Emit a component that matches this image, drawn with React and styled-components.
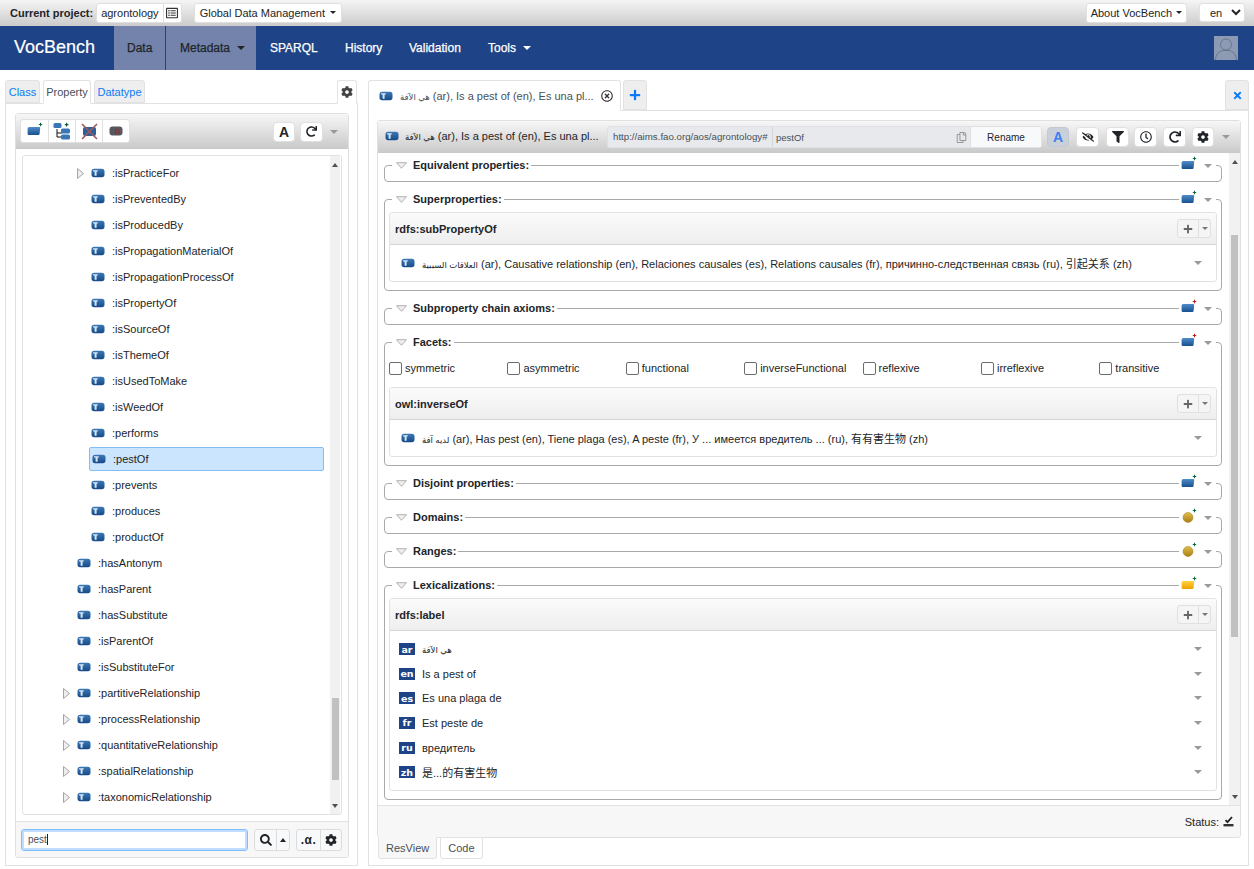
import React, { useId } from "react";
import styled, { createGlobalStyle } from "styled-components";
import { FaCog, FaSearch, FaFilter, FaEyeSlash, FaRegClock, FaRedo, FaPlus, FaTimes, FaRegCopy, FaRegTimesCircle, FaRegListAlt } from "react-icons/fa";

const FONT = `"Liberation Sans", "DejaVu Sans", "Noto Sans CJK SC", sans-serif`;

const Global = createGlobalStyle`
  html, body { margin: 0; height: 100%; overflow: hidden; background: #fff; }
  #root { height: 100%; }
  * { box-sizing: border-box; }
  body { font-family: ${FONT}; font-size: 11px; color: #212529; }
`;

const Page = styled.div`height: 869px; display: flex; flex-direction: column;`;

const TopBar = styled.header`
  height: 26px; flex: none; display: flex; align-items: center; padding: 0 9px 1px 10px;
  background: linear-gradient(#f5f5f5, #cbcbcb);
`;
const ProjectLabel = styled.b`font-size: 11px; margin-right: 3px;`;
const TopGroup = styled.div`
  height: 20px; display: flex; align-items: center; background: #fff; border: 1px solid #e0e0e0; border-radius: 3px;
`;
const ProjectName = styled.span`padding: 0 4px; line-height: 18px; border-right: 1px solid #ddd; font-size: 11px;`;
const ProjectIcon = styled.span`width: 17px; display: flex; justify-content: center; font-size: 12px; color: #333;`;
const TopButton = styled.button`
  height: 20px; display: flex; align-items: center; gap: ${p => p.$gap}px; padding: 0 ${p => p.$pad}px; margin-left: ${p => p.$ml || 0}px;
  background: #fff; border: 1px solid #e0e0e0; border-radius: 3px; font: 11px ${FONT}; color: #212529;
`;
const Spacer = styled.div`flex: 1;`;
const LangSelect = styled.select`
  width: 46px; height: 19px; margin-left: 12px; padding: 0 0 0 6px; background-color: #fff; border: 1px solid #e0e0e0; border-radius: 3px;
  font: 11px ${FONT}; color: #212529;
`;

const Caret = styled.i`
  display: inline-block; flex: none; width: 0; height: 0;
  border-left: ${p => p.$s || 3}px solid transparent; border-right: ${p => p.$s || 3}px solid transparent;
  border-top: ${p => p.$s || 3}px solid ${p => p.$c || "#212529"};
  margin-left: ${p => p.$ml || 0}px;
`;

const Nav = styled.nav`
  height: 44px; flex: none; display: flex; align-items: stretch; background: #1e4387; padding-right: 16px;
`;
const Brand = styled.div`width: 114px; padding-left: 14px; line-height: 42px; font-size: 18px; color: #fff; -webkit-text-stroke: 0.2px #fff;`;
const NavItem = styled.a`
  display: flex; align-items: center; gap: 6px; padding: 0 ${p => p.$px ?? 14}px; font-size: 12px; -webkit-text-stroke: 0.25px currentColor;
  width: ${p => p.$w}px; flex: none;
  color: ${p => p.$active ? "#212529" : "#fff"};
  background: ${p => p.$active ? "#7383ac" : "transparent"};
  margin-right: ${p => p.$mr || 0}px;
`;
const Avatar = styled.svg`width: 24px; height: 24px; align-self: center; margin-left: auto;`;

const Main = styled.main`flex: 1; min-height: 0; display: flex; gap: 10px; padding: 10px 5px 3px;`;
const LeftCol = styled.section`width: 353px; flex: none; display: flex; flex-direction: column;`;
const RightCol = styled.section`flex: 1; min-width: 0; display: flex; flex-direction: column;`;

const Tabs = styled.div`display: flex; gap: ${p => p.$gap ?? 3}px; height: ${p => p.$h || 23}px; flex: none; position: relative; z-index: 1;`;
const Tab = styled.div`
  display: flex; align-items: center; justify-content: center; width: ${p => p.$w}px; font-size: 11px; border: 1px solid #e2e2e2; border-radius: 3px 3px 0 0;
  height: ${p => p.$active ? "calc(100% + 1px)" : "100%"};
  color: ${p => p.$active ? "#495057" : "#0d7bf5"}; background: ${p => p.$active ? "#fff" : "#eeeeee"};
  border-bottom-color: ${p => p.$active ? "#fff" : "#e2e2e2"};
  margin-left: ${p => p.$auto ? "auto" : 0}; margin-right: ${p => p.$mr || 0}px;
`;
const Panel = styled.div`flex: 1; min-height: 0; display: flex; flex-direction: column; border: 1px solid #e2e2e2; padding: ${p => p.$pad};`;
const Card = styled.div`flex: 1; min-height: 0; display: flex; flex-direction: column; border: 1px solid #e0e0e0; border-radius: 3px;`;
const Toolbar = styled.div`
  height: ${p => p.$h}px; flex: none; display: flex; align-items: center; padding: 0 ${p => p.$pr}px 0 ${p => p.$pl}px;
  background: linear-gradient(#f7f7f7, #c9c9c9);
`;
const BtnGroup = styled.div`display: flex; background: #fff; border: 1px solid #e0e0e0; border-radius: 3px; height: 24px; margin-bottom: 1px;`;
const GroupBtn = styled.span`
  width: 27px; display: flex; align-items: center; justify-content: center;
  & + & { border-left: 1px solid #e0e0e0; }
`;
const IconBtn = styled.span`
  width: ${p => p.$w || 23}px; height: ${p => p.$h || 20}px; display: flex; align-items: center; justify-content: center; flex: none;
  background: ${p => p.$on ? "#c9d0da" : "#fff"}; border: 1px solid ${p => p.$on ? "#c4c9d1" : "#e0e0e0"}; border-radius: 4px;
  color: ${p => p.$c || "#212529"}; font-size: ${p => p.$fs || 12}px; margin-left: ${p => p.$ml || 0}px;
`;
const LetterA = styled.b`font: bold 14px "Liberation Sans", sans-serif;`;

const TreeWrap = styled.div`flex: 1; min-height: 0; padding: 6px; display: flex;`;
const TreeBox = styled.div`flex: 1; min-width: 0; display: flex; border: 1px solid #e2e2e2; border-radius: 3px; overflow: hidden;`;
const TreeList = styled.ul`flex: 1; min-width: 0; margin: 0; padding: 4px 6px 0 0; list-style: none;`;
const TreeRow = styled.li`display: flex; align-items: center; height: 26px; padding-left: ${p => 38 + p.$level * 14}px;`;
const ArrowSlot = styled.span`width: 14px; flex: none; display: flex; align-items: center; padding-left: 2px;`;
const TreeLabel = styled.span`
  flex: 1; height: 24px; display: flex; align-items: center; gap: 7px; border-radius: 2px; font-size: 11px;
  padding-left: ${p => p.$sel ? 2 : 1}px; border: 1px solid ${p => p.$sel ? "#85bdf2" : "transparent"};
  background: ${p => p.$sel ? "#cce5ff" : "transparent"};
`;
const Scrollbar = styled.div`width: ${p => p.$w || 10}px; flex: none; background: #f1f1f1; display: flex; flex-direction: column; margin-right: ${p => p.$mr || 0}px;`;
const ScrollEnd = styled.span`height: 17px; flex: none; display: flex; align-items: center; justify-content: center;`;
const UpTri = styled.i`width: 0; height: 0; border-left: 3px solid transparent; border-right: 3px solid transparent; border-bottom: 4px solid ${p => p.$c || "#505050"};`;
const DownTri = styled.i`width: 0; height: 0; border-left: 3px solid transparent; border-right: 3px solid transparent; border-top: 4px solid #505050;`;
const ScrollTrack = styled.div`flex: 1; min-height: 0;`;
const ScrollThumb = styled.div`width: 7px; height: ${p => p.$h}px; margin: ${p => p.$top}px auto 0; background: #c1c1c1;`;

const SearchBar = styled.div`
  height: 36px; flex: none; display: flex; align-items: center; padding: 0 6px 0 5px; background: #f7f7f7; border-top: 1px solid #e2e2e2; border-radius: 0 0 3px 3px;
`;
const SearchField = styled.div`
  width: 227px; flex: none; height: 22px; display: flex; align-items: center; padding: 0 6px; border: 1px solid #80bdff; border-radius: 3px; box-shadow: 0 0 0 2px #bfdeff inset;
  font-size: 10px; color: #495057; background: #fff;
`;
const TextCursor = styled.span`width: 1px; height: 11px; background: #222;`;
const FootGroup = styled.div`display: flex; flex: none; height: 22px; border: 1px solid #dcdcdc; border-radius: 3px; background: #f8f9fa; margin-left: ${p => p.$ml}px;`;
const FootBtn = styled.span`
  width: ${p => p.$w}px; display: flex; align-items: center; justify-content: center; font-size: 12px; color: #212529;
  & + & { border-left: 1px solid #dcdcdc; }
`;
const AlphaText = styled.b`font-size: 12px; letter-spacing: 0.5px;`;

const DocTab = styled(Tab)`width: 253px; gap: 7px; padding: 0 7px 0 10px; color: #495057; font-size: 11px;`;
const AddTab = styled(Tab)`width: 24px; color: #0d7bf5; font-size: ${p => p.$fs || 12}px;`;
const Ellipsis = styled.span`flex: 1; min-width: 0; white-space: nowrap; overflow: hidden; text-overflow: ellipsis;`;
const CloseIcon = styled.span`display: flex; font-size: 12px; color: #333;`;
const Arabic = styled.span`font-size: 8.5px;`;

const HeaderTitle = styled.div`width: 222px; flex: none; display: flex; align-items: center; gap: 6px; padding-bottom: 2px; font-size: 11px;`;
const IriGroup = styled.div`
  flex: none; width: 435px; height: 22px; display: flex; align-items: center; border: 1px solid #dfe2e5; border-radius: 3px; background: #e7e9ec; font-size: 9.7px; color: #495057;
`;
const IriNs = styled.span`width: 165px; padding-left: 5px; line-height: 20px; border-right: 1px solid #d3d6da; white-space: nowrap;`;
const IriLocal = styled.span`flex: 1; padding-left: 3px; font-size: 9.5px;`;
const CopyIcon = styled.span`display: flex; padding-right: 3px; font-size: 11px; color: #999;`;
const RenameBtn = styled.span`
  width: 71px; height: 20px; display: flex; align-items: center; justify-content: center; background: #f8f9fa; border-left: 1px solid #e0e0e0; font-size: 10px; color: #212529;
`;

const ResBody = styled.div`flex: 1; min-height: 0; display: flex;`;
const Sections = styled.div`flex: 1; min-width: 0; padding: 2px 7px 0 6px; overflow: hidden;`;

const Field = styled.fieldset`
  margin: 0 0 7px; padding: 0 4px 6px; border: 1px solid #a9a9a9; border-radius: 4px; min-width: 0;
`;
const Legend = styled.legend`
  width: calc(100% - 4px); margin-left: 3px; padding: 0 0 0 4px; height: 20px; display: flex; align-items: center;
`;
const LegendTitle = styled.b`margin-left: 6px; font-size: 11px; white-space: nowrap; color: #212529;`;
const LegendRule = styled.span`flex: 1; height: 1px; margin: 0 2px; background: #a9a9a9;`;
const LegendEnd = styled.span`width: 19px; display: flex; justify-content: flex-end; padding-right: 4px; padding-top: 1px;`;

const SubCard = styled.div`margin: ${p => p.$mt ?? 3}px 0 2px; border: 1px solid #e2e2e2; border-radius: 3px; overflow: hidden;`;
const SubHead = styled.div`
  height: 32px; display: flex; align-items: center; justify-content: space-between; padding: 0 5px 0 5px; background: linear-gradient(#fbfbfb, #eeeeee); border-bottom: 1px solid #d5d5d5;
`;
const SubTitle = styled.b`font-size: 11px;`;
const PlusGroup = styled.span`display: flex; height: 19px; border: 1px solid #e0e0e0; border-radius: 3px; background: #f5f5f5;`;
const PlusBtn = styled.span`width: 20px; display: flex; align-items: center; justify-content: center; font-size: 10px; color: #666;`;
const PlusCaret = styled.span`width: 12px; display: flex; align-items: center; justify-content: center; border-left: 1px solid #e0e0e0;`;
const ValueRow = styled.div`height: 36px; display: flex; align-items: center; gap: 7px; padding: 0 14px 1px 11px; font-size: 11px;`;
const ValueText = styled.span`flex: 1; white-space: nowrap;`;
const RowCaret = styled(Caret).attrs({ $s: 4, $c: "#999" })``;
const FacetGrid = styled.div`display: grid; grid-template-columns: repeat(7, 118.4px); height: 20px; margin: 6px 0 9px; align-items: center;`;
const FacetLabel = styled.label`display: flex; align-items: center; gap: 3px; font-size: 11px; margin-top: -1px;`;
const Check = styled.input`
  appearance: none; width: 13px; height: 13px; margin: 1px 0 0 0; border: 1px solid #6c6c6c; border-radius: 2px; background: #fff; flex: none;
`;
const LexBody = styled.div`padding: 6px 14px 5px 9px;`;
const LexRow = styled.div`height: 24.6px; display: flex; align-items: center; gap: 7px; font-size: 11px;`;
const Flag = styled.span`
  width: 16px; height: 12px; flex: none; display: flex; align-items: center; justify-content: center; background: #1e4387; color: #fff; font: bold 9.5px/1 "DejaVu Sans", sans-serif;
`;

const StatusBar = styled.div`
  height: 32px; flex: none; display: flex; align-items: center; justify-content: flex-end; gap: 4px; padding-right: 6px; background: #f7f7f7; border-top: 1px solid #e2e2e2; border-radius: 0 0 3px 3px; font-size: 11px;
`;
const BottomTabs = styled.div`display: flex; gap: 3px; height: 22px; flex: none; padding-left: 1px; margin-bottom: 6px; margin-top: -1px;`;
const BottomTab = styled.div`
  padding: 0 7px; display: flex; align-items: center; font-size: 11px; color: #495057; border: 1px solid #e2e2e2; border-top-color: ${p => p.$active ? "#f7f7f7" : "#e2e2e2"}; border-radius: 0 0 3px 3px;
  background: ${p => p.$active ? "#f7f7f7" : "#fff"};
`;
const DocPanel = styled(Panel)`padding: 9px 7px 0 8px;`;
const ShapeSvg = styled.svg`flex: none; margin-bottom: 3px;`;

function PropIcon() {
  const id = useId();
  return (
    <svg width="14" height="10" viewBox="0 0 14 10" style={{ flex: "none" }}>
      <defs><linearGradient id={id} x1="0" y1="0" x2="0" y2="1"><stop offset="0" stopColor="#3c79b6" /><stop offset="1" stopColor="#164a88" /></linearGradient></defs>
      <rect x="0.5" y="0.8" width="13" height="8.4" rx="2.6" fill={`url(#${id})`} />
      <path d="M2 2.2h4.8v1L5.6 3.7V7.800H3.600V3.700L2 3.200z" fill="#d6e4f3" />
    </svg>
  );
}
function AddShape({ kind = "prop", plus = "#0b6b3a" }) {
  const id = useId();
  const stops = kind === "lex" ? ["#ffd23f", "#f0a000"] : kind === "ball" ? ["#e0bd4c", "#a87f14"] : ["#4f8cc8", "#17508f"];
  return (
    <ShapeSvg width="16" height="15" viewBox="0 0 16 15">
      <defs><linearGradient id={id} x1="0" y1="0" x2="0" y2="1"><stop offset="0" stopColor={stops[0]} /><stop offset="1" stopColor={stops[1]} /></linearGradient></defs>
      {kind === "ball"
        ? <circle cx="7" cy="9.5" r="5" fill={`url(#${id})`} stroke="#a07a18" strokeWidth="0.5" />
        : <path d="M2.3 5h10q1 0 .9 1l-.6 5.800q-.1 1.200-1.200 1.200H1.800q-1.200 0-1.200-1.200V6.500Q.6 5 2.300 5z" fill={`url(#${id})`} />}
      <path d="M13 .8h1v1.200h1.200v1H14v1.200h-1V3h-1.200V2H13z" fill={plus} />
    </ShapeSvg>
  );
}
function TreeArrow() {
  return <svg width="7" height="11" viewBox="0 0 7 11"><path d="M.5.5l6 5-6 5z" fill="#eee" stroke="#a5a5a5" /></svg>;
}
function FoldArrow() {
  return <svg width="11" height="7" viewBox="0 0 11 7" style={{ flex: "none" }}><path d="M.5.7h10l-5 5.6z" fill="#efefef" stroke="#b0b0b0" /></svg>;
}
function HierIcon() {
  return (
    <svg width="18" height="18" viewBox="0 0 18 18">
      <path d="M4 7v8h5M4 11h5" fill="none" stroke="#111" strokeWidth="1" />
      <rect x="0.5" y="1" width="8" height="5" rx="1.5" fill="#3a76b5" />
      <rect x="8" y="6.5" width="9" height="5" rx="1.5" fill="#3a76b5" />
      <rect x="8" y="12.5" width="9" height="5" rx="1.5" fill="#3a76b5" />
      <path d="M13 .8h1.200V2h1.200v1.200h-1.200v1.200H13V3.200h-1.200V2H13z" fill="#0b5b33" />
    </svg>
  );
}
function DeleteIcon() {
  return (
    <svg width="17" height="17" viewBox="0 0 17 17">
      <rect x="2" y="4" width="13" height="9" rx="2" fill="#2c5f9e" />
      <path d="M1 1l15 15M16 1L1 16" stroke="#a05a5a" strokeWidth="1.6" />
    </svg>
  );
}
function DeprecatedIcon() {
  return (
    <svg width="14" height="10" viewBox="0 0 14 10">
      <rect x="0.5" y="0.5" width="13" height="9" rx="3" fill="#55595f" />
      <text x="6" y="8" fontSize="7.5" fontWeight="bold" fill="#8e3030" fontFamily="Liberation Sans">D</text>
    </svg>
  );
}
function StatusIcon() {
  return (
    <svg width="11" height="11" viewBox="0 0 11 11">
      <path d="M2.5 4.2L4.5 6.2 9 1" fill="none" stroke="#222" strokeWidth="1.8" />
      <rect x="0.5" y="8" width="10" height="2.4" fill="#333" />
    </svg>
  );
}

const tree = [
  [1, ":isPracticeFor", true], [1, ":isPreventedBy"], [1, ":isProducedBy"], [1, ":isPropagationMaterialOf"], [1, ":isPropagationProcessOf"],
  [1, ":isPropertyOf"], [1, ":isSourceOf"], [1, ":isThemeOf"], [1, ":isUsedToMake"], [1, ":isWeedOf"], [1, ":performs"], [1, ":pestOf", false, true],
  [1, ":prevents"], [1, ":produces"], [1, ":productOf"], [0, ":hasAntonym"], [0, ":hasParent"], [0, ":hasSubstitute"], [0, ":isParentOf"], [0, ":isSubstituteFor"],
  [0, ":partitiveRelationship", true], [0, ":processRelationship", true], [0, ":quantitativeRelationship", true], [0, ":spatialRelationship", true], [0, ":taxonomicRelationship", true],
];
const facets = ["symmetric", "asymmetric", "functional", "inverseFunctional", "reflexive", "irreflexive", "transitive"];
const lex = [["ar", "هي الآفة"], ["en", "Is a pest of"], ["es", "Es una plaga de"], ["fr", "Est peste de"], ["ru", "вредитель"], ["zh", "是...的有害生物"]];

function Section({ title, kind, plus, children }) {
  return (
    <Field>
      <Legend>
        <FoldArrow />
        <LegendTitle>{title}</LegendTitle>
        <LegendRule />
        <AddShape kind={kind} plus={plus} />
        <LegendEnd><Caret $s={4} $c="#999" $ml={2} /></LegendEnd>
      </Legend>
      {children}
    </Field>
  );
}
function SubHeader({ title }) {
  return (
    <SubHead>
      <SubTitle>{title}</SubTitle>
      <PlusGroup>
        <PlusBtn><FaPlus /></PlusBtn>
        <PlusCaret><Caret $c="#777" /></PlusCaret>
      </PlusGroup>
    </SubHead>
  );
}

export default function App() {
  return (
    <Page>
      <Global />
      <TopBar>
        <ProjectLabel>Current project:</ProjectLabel>
        <TopGroup>
          <ProjectName>agrontology</ProjectName>
          <ProjectIcon><FaRegListAlt /></ProjectIcon>
        </TopGroup>
        <TopButton $ml={12} $gap={5} $pad={5}>Global Data Management <Caret /></TopButton>
        <Spacer />
        <TopButton $gap={4} $pad={4}>About VocBench <Caret /></TopButton>
        <LangSelect defaultValue="en"><option value="en">en</option></LangSelect>
      </TopBar>

      <Nav>
        <Brand>VocBench</Brand>
        <NavItem $active $w={51} $mr={1} $px={13}>Data</NavItem>
        <NavItem $active $w={90}>Metadata <Caret $s={4} $ml={1} /></NavItem>
        <NavItem $w={75}>SPARQL</NavItem>
        <NavItem $w={64}>History</NavItem>
        <NavItem $w={79}>Validation</NavItem>
        <NavItem>Tools <Caret $s={4} $c="#fff" $ml={1} /></NavItem>
        <Avatar viewBox="0 0 24 24">
          <rect width="24" height="24" fill="#8c9ab4" />
          <circle cx="12" cy="8.5" r="5.5" fill="none" stroke="#6b7688" strokeWidth="1" />
          <path d="M1.5 24c0-6 4-9 7.5-9.5h6c3.5.5 7.5 3.5 7.5 9.5" fill="none" stroke="#6b7688" strokeWidth="1" />
        </Avatar>
      </Nav>

      <Main>
        <LeftCol>
          <Tabs>
            <Tab $w={35}>Class</Tab>
            <Tab $active $w={48}>Property</Tab>
            <Tab $w={51}>Datatype</Tab>
            <Tab $active $auto $mr={1} $w={20}><FaCog color="#444" size={12} /></Tab>
          </Tabs>
          <Panel $pad="9px 8px 7px 9px">
            <Card>
              <Toolbar $h={35} $pl={4} $pr={10}>
                <BtnGroup>
                  <GroupBtn><AddShape /></GroupBtn>
                  <GroupBtn><HierIcon /></GroupBtn>
                  <GroupBtn><DeleteIcon /></GroupBtn>
                  <GroupBtn><DeprecatedIcon /></GroupBtn>
                </BtnGroup>
                <Spacer />
                <IconBtn $w={22}><LetterA>A</LetterA></IconBtn>
                <IconBtn $ml={5} $fs={11}><FaRedo /></IconBtn>
                <Caret $s={4} $c="#999" $ml={7} />
              </Toolbar>
              <TreeWrap>
                <TreeBox>
                  <TreeList>
                    {tree.map(([level, name, arrow, sel]) => (
                      <TreeRow key={name} $level={level}>
                        <ArrowSlot>{arrow && <TreeArrow />}</ArrowSlot>
                        <TreeLabel $sel={sel}><PropIcon />{name}</TreeLabel>
                      </TreeRow>
                    ))}
                  </TreeList>
                  <Scrollbar $mr={1}>
                    <ScrollEnd><UpTri /></ScrollEnd>
                    <ScrollTrack><ScrollThumb $top={525} $h={82} /></ScrollTrack>
                    <ScrollEnd><DownTri /></ScrollEnd>
                  </Scrollbar>
                </TreeBox>
              </TreeWrap>
              <SearchBar>
                <SearchField>pest<TextCursor /></SearchField>
                <FootGroup $ml={6}>
                  <FootBtn $w={21}><FaSearch /></FootBtn>
                  <FootBtn $w={13}><UpTri $c="#212529" /></FootBtn>
                </FootGroup>
                <FootGroup $ml={6}>
                  <FootBtn $w={23}><AlphaText>.α.</AlphaText></FootBtn>
                  <FootBtn $w={21}><FaCog /></FootBtn>
                </FootGroup>
              </SearchBar>
            </Card>
          </Panel>
        </LeftCol>

        <RightCol>
          <Tabs $h={30} $gap={2}>
            <DocTab $active>
              <PropIcon />
              <Ellipsis><Arabic>هي الآفة</Arabic> (ar), Is a pest of (en), Es una pl...</Ellipsis>
              <CloseIcon><FaRegTimesCircle /></CloseIcon>
            </DocTab>
            <AddTab><FaPlus /></AddTab>
            <AddTab $auto $fs={11}><FaTimes /></AddTab>
          </Tabs>
          <DocPanel>
            <Card>
              <Toolbar $h={32} $pl={7} $pr={10}>
                <HeaderTitle>
                  <PropIcon />
                  <Ellipsis><Arabic>هي الآفة</Arabic> (ar), Is a pest of (en), Es una pl...</Ellipsis>
                </HeaderTitle>
                <IriGroup>
                  <IriNs>http://aims.fao.org/aos/agrontology#</IriNs>
                  <IriLocal>pestOf</IriLocal>
                  <CopyIcon><FaRegCopy /></CopyIcon>
                  <RenameBtn>Rename</RenameBtn>
                </IriGroup>
                <IconBtn $on $c="#3f7df0" $ml={5} $w={22} $h={20}><LetterA>A</LetterA></IconBtn>
                <IconBtn $ml={7} $fs={12}><FaEyeSlash /></IconBtn>
                <IconBtn $ml={7}><FaFilter /></IconBtn>
                <IconBtn $ml={5}><FaRegClock /></IconBtn>
                <IconBtn $ml={6}><FaRedo /></IconBtn>
                <IconBtn $ml={6} $w={22}><FaCog /></IconBtn>
                <Caret $s={4} $c="#999" $ml={8} />
              </Toolbar>
              <ResBody>
                <Sections>
                  <Section title="Equivalent properties:" />
                  <Section title="Superproperties:">
                    <SubCard>
                      <SubHeader title="rdfs:subPropertyOf" />
                      <ValueRow>
                        <PropIcon />
                        <ValueText><Arabic>العلاقات السببية</Arabic> (ar), Causative relationship (en), Relaciones causales (es), Relations causales (fr), причинно-следственная связь (ru), 引起关系 (zh)</ValueText>
                        <RowCaret />
                      </ValueRow>
                    </SubCard>
                  </Section>
                  <Section title="Subproperty chain axioms:" plus="#c41a1a" />
                  <Section title="Facets:" plus="#c41a1a">
                    <FacetGrid>
                      {facets.map(f => (
                        <FacetLabel key={f}><Check type="checkbox" readOnly />{f}</FacetLabel>
                      ))}
                    </FacetGrid>
                    <SubCard $mt={0}>
                      <SubHeader title="owl:inverseOf" />
                      <ValueRow>
                        <PropIcon />
                        <ValueText><Arabic>لديه آفة</Arabic> (ar), Has pest (en), Tiene plaga (es), A peste (fr), У ... имеется вредитель ... (ru), 有有害生物 (zh)</ValueText>
                        <RowCaret />
                      </ValueRow>
                    </SubCard>
                  </Section>
                  <Section title="Disjoint properties:" />
                  <Section title="Domains:" kind="ball" />
                  <Section title="Ranges:" kind="ball" />
                  <Section title="Lexicalizations:" kind="lex">
                    <SubCard>
                      <SubHeader title="rdfs:label" />
                      <LexBody>
                        {lex.map(([code, text]) => (
                          <LexRow key={code}>
                            <Flag>{code}</Flag>
                            <ValueText>{code === "ar" ? <Arabic>{text}</Arabic> : text}</ValueText>
                            <RowCaret />
                          </LexRow>
                        ))}
                      </LexBody>
                    </SubCard>
                  </Section>
                </Sections>
                <Scrollbar $w={11}>
                  <ScrollEnd><UpTri /></ScrollEnd>
                  <ScrollTrack><ScrollThumb $top={65} $h={402} /></ScrollTrack>
                  <ScrollEnd><DownTri /></ScrollEnd>
                </Scrollbar>
              </ResBody>
              <StatusBar>Status: <StatusIcon /></StatusBar>
            </Card>
            <BottomTabs>
              <BottomTab $active>ResView</BottomTab>
              <BottomTab>Code</BottomTab>
            </BottomTabs>
          </DocPanel>
        </RightCol>
      </Main>
    </Page>
  );
}
